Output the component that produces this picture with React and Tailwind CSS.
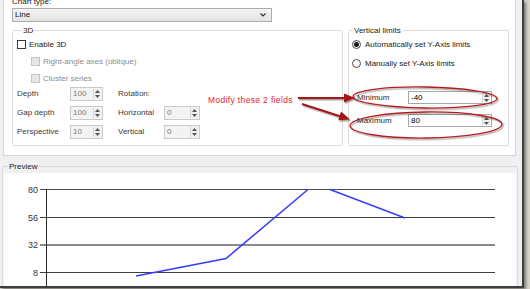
import React from "react";

const font = { fontFamily: '"Liberation Sans", Arial, sans-serif' };

function Arrows() {
  return (
    <div className="flex flex-col items-center justify-center gap-[2px] w-[8px] h-full border-l border-[#d6d6d6] bg-[#efefef]">
      <svg width="5" height="3" viewBox="0 0 5 3">
        <path d="M0 3 L2.5 0 L5 3 Z" fill="#555" />
      </svg>
      <svg width="5" height="3" viewBox="0 0 5 3">
        <path d="M0 0 L2.5 3 L5 0 Z" fill="#555" />
      </svg>
    </div>
  );
}

function Spin({ value, wide }) {
  return (
    <div
      className={`flex h-[14px] border border-[#c9c9c9] bg-[#f3f3f3] text-[#7a7a7a] ${
        wide ? "w-[36px]" : "w-[33px]"
      }`}
    >
      <div className="flex-1 pl-[2px] leading-[12px]">{value}</div>
      <div className="py-[1px] pr-[1px] h-full">
        <Arrows />
      </div>
    </div>
  );
}

function Field({ value }) {
  return (
    <div className="flex w-[84px] h-[13px] border border-[#a8a8a8] bg-white text-black">
      <div className="flex-1 pl-[2px] leading-[11px]">{value}</div>
      <div className="py-[1px] pr-[1px] h-full">
        <Arrows />
      </div>
    </div>
  );
}

function Check({ label, disabled }) {
  return (
    <div className="flex items-center gap-[3px] h-[9px]">
      <div
        className={
          disabled
            ? "w-[9px] h-[9px] border border-[#c4c4c4] bg-[#e7e7e7]"
            : "w-[9px] h-[9px] border border-[#3a3a3a] bg-white"
        }
      />
      <span className={disabled ? "text-[#8c8c8c] leading-[9px]" : "text-[#1a1a1a] leading-[9px]"}>{label}</span>
    </div>
  );
}

function Radio({ label, checked }) {
  return (
    <div className="flex items-center gap-[4px] h-[9px]">
      <div className="w-[9px] h-[9px] rounded-full border border-[#4a4a4a] bg-white flex items-center justify-center">
        {checked && <div className="w-[5px] h-[5px] rounded-full bg-[#1a1a1a]" />}
      </div>
      <span className="text-[#1a1a1a] leading-[9px]">{label}</span>
    </div>
  );
}

function Chart() {
  const grid = [
    { y: 189.5, label: "80", color: "#4a4a4a", w: 1 },
    { y: 217.5, label: "56", color: "#3e3e3e", w: 1 },
    { y: 245, label: "32", color: "#8a8a8a", w: 2 },
    { y: 272.5, label: "8", color: "#3e3e3e", w: 1 },
  ];
  return (
    <svg width="512" height="114" viewBox="4 173 512 114" className="block">
      {grid.map((g) => (
        <g key={g.label}>
          <line x1="40" x2="495" y1={g.y} y2={g.y} stroke={g.color} strokeWidth={g.w} />
          <text
            x="38"
            y={g.y + 3}
            textAnchor="end"
            fontSize="9"
            fill="#333"
            fontFamily="Liberation Sans, Arial, sans-serif"
          >
            {g.label}
          </text>
        </g>
      ))}
      <line x1="46.5" x2="46.5" y1="189" y2="290" stroke="#2a2a2a" strokeWidth="1" />
      <polyline points="136,276 226,258.5 308,189.5" fill="none" stroke="#3b3bff" strokeWidth="1.6" />
      <polyline points="330,189.5 405,218" fill="none" stroke="#3b3bff" strokeWidth="1.6" />
    </svg>
  );
}

function Annotations() {
  return (
    <>
      <svg width="530" height="289" viewBox="0 0 530 289" className="absolute left-0 top-0 pointer-events-none">
        <defs>
          <filter id="sh" x="-10%" y="-30%" width="120%" height="160%">
            <feDropShadow dx="1.2" dy="1.5" stdDeviation="0.7" floodColor="#000" floodOpacity="0.35" />
          </filter>
        </defs>
        <g filter="url(#sh)" stroke="#b41d1d" fill="none" strokeWidth="1.3">
          <ellipse cx="425" cy="97.5" rx="72" ry="10.5" transform="rotate(0.8 425 97.5)" />
          <ellipse cx="426" cy="125" rx="76" ry="13" transform="rotate(-0.6 426 125)" />
        </g>
        <g filter="url(#sh)" fill="#a51919" stroke="#a51919">
          <line x1="298" y1="98" x2="345" y2="98" strokeWidth="2" />
          <path d="M344 93.5 L355 98 L344 102.5 Z" stroke="none" />
          <line x1="302" y1="104" x2="340" y2="116.2" strokeWidth="2" />
          <path d="M338.3 120.3 L350 119.5 L341 111.6 Z" stroke="none" />
        </g>
      </svg>
      <div
        className="absolute left-[208px] top-[95px] text-[8.5px] leading-[10px] tracking-[0.35px] text-[#e42626]"
        style={font}
      >
        Modify these 2 fields
      </div>
    </>
  );
}

export default function App() {
  return (
    <div className="relative w-[530px] h-[289px] overflow-hidden bg-[#d9d5cd] text-[8px]" style={font}>
      <div className="w-[524px] h-[288px] bg-[#f0f0f0] border-r-2 border-b-2 border-[#3d3d3d] shadow-[2px_2px_3px_rgba(0,0,0,0.45)] flex flex-col overflow-hidden">
        {/* upper options panel */}
        <div className="ml-[3px] w-[513px] h-[156px] shrink-0 bg-white border-l border-r border-b border-[#d6d6d6] pl-[8px] flex flex-col">
          <div className="mt-[-2px] h-[8px] leading-[8px] text-[#222]">Chart type:</div>
          <div className="mt-[2px] w-[260px] h-[14px] border border-[#adadad] bg-gradient-to-b from-[#f4f4f4] to-[#e4e4e4] flex items-center justify-between pl-[2px] pr-[5px] text-[#111]">
            <span className="leading-[12px]">Line</span>
            <svg width="6" height="4" viewBox="0 0 6 4">
              <path d="M0.5 0.5 L3 3 L5.5 0.5" fill="none" stroke="#333" strokeWidth="1.2" />
            </svg>
          </div>

          <div className="mt-[8px] flex gap-[5px]">
            {/* 3D */}
            <div className="w-[331px] h-[116px] border border-[#dcdcdc] rounded-[2px] flex flex-col">
              <div className="-mt-[5px] ml-[9px] px-[1px] w-fit h-[9px] leading-[9px] bg-white text-[#222]">3D</div>
              <div className="mt-[5px] pl-[4px]">
                <Check label="Enable 3D" />
              </div>
              <div className="mt-[8px] pl-[18px]">
                <Check label="Right-angle axes (oblique)" disabled />
              </div>
              <div className="mt-[8px] pl-[18px]">
                <Check label="Cluster series" disabled />
              </div>
              <div className="mt-[4px] pl-[4px] flex flex-col gap-[5px] text-[#3a3a3a]">
                <div className="flex items-center h-[14px]">
                  <span className="w-[53px]">Depth</span>
                  <Spin value="100" />
                  <span className="ml-[15px] w-[46px]">Rotation:</span>
                </div>
                <div className="flex items-center h-[14px]">
                  <span className="w-[53px]">Gap depth</span>
                  <Spin value="100" />
                  <span className="ml-[15px] w-[46px]">Horizontal</span>
                  <Spin value="0" wide />
                </div>
                <div className="flex items-center h-[14px]">
                  <span className="w-[53px]">Perspective</span>
                  <Spin value="10" />
                  <span className="ml-[15px] w-[46px]">Vertical</span>
                  <Spin value="0" wide />
                </div>
              </div>
            </div>

            {/* Vertical limits */}
            <div className="w-[161px] h-[116px] border border-[#dcdcdc] rounded-[2px] flex flex-col">
              <div className="-mt-[5px] ml-[4px] px-[1px] w-fit h-[9px] leading-[9px] bg-white text-[#222]">Vertical limits</div>
              <div className="mt-[5px] pl-[3px]">
                <Radio label="Automatically set Y-Axis limits" checked />
              </div>
              <div className="mt-[10px] pl-[3px]">
                <Radio label="Manually set Y-Axis limits" />
              </div>
              <div className="mt-[23px] pl-[8px] flex flex-col gap-[10px] text-[#2a2a2a]">
                <div className="flex items-center">
                  <span className="w-[51px]">Minimum</span>
                  <Field value="-40" />
                </div>
                <div className="flex items-center">
                  <span className="w-[51px]">Maximum</span>
                  <Field value="80" />
                </div>
              </div>
            </div>
          </div>
        </div>

        {/* preview */}
        <div className="mt-[10px] ml-[2px] w-[516px] flex-1 border border-[#dcdcdc] rounded-[2px] flex flex-col">
          <div className="-mt-[5px] ml-[5px] px-[1px] w-fit h-[9px] leading-[9px] bg-[#f0f0f0] text-[#222]">Preview</div>
          <div className="mt-[2px] mx-[1px] flex-1 bg-white overflow-hidden">
            <Chart />
          </div>
        </div>
      </div>
      <Annotations />
    </div>
  );
}
